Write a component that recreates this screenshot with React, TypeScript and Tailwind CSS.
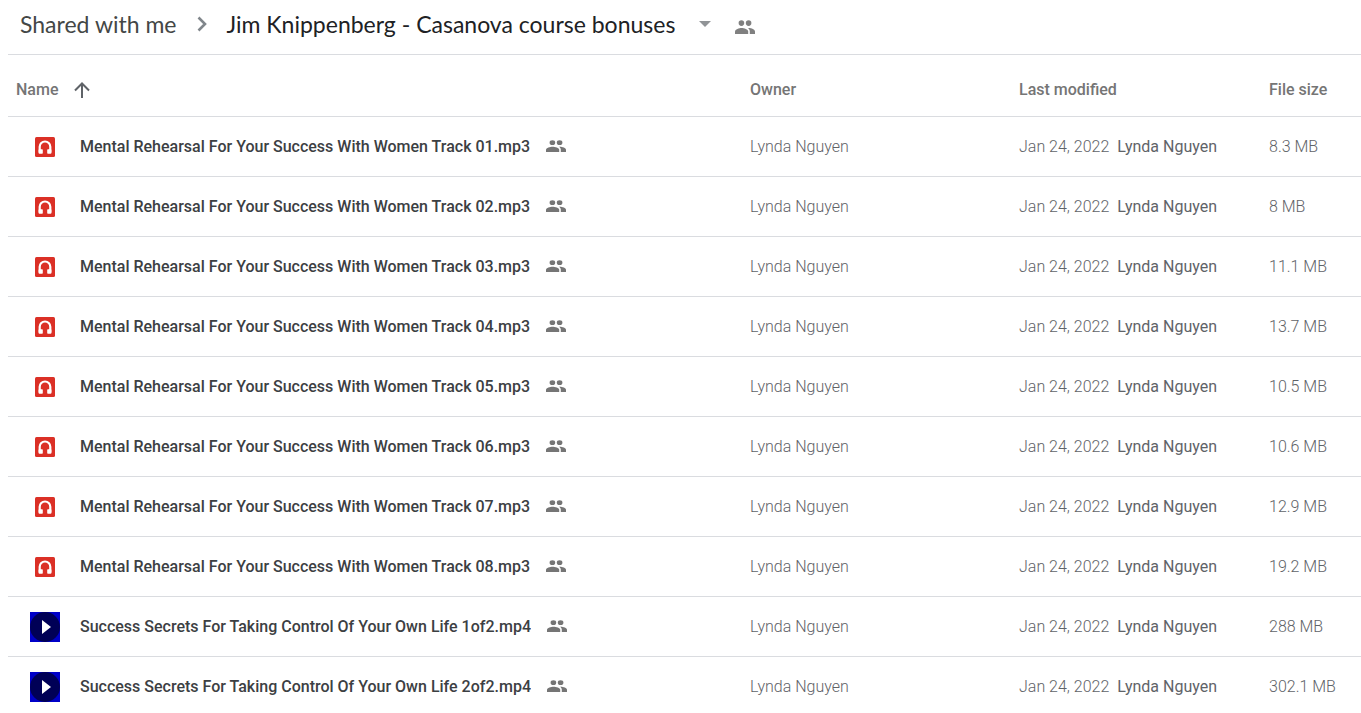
interface DriveFile {
  name: string
  kind: 'audio' | 'video'
  size: string
}

const OWNER = 'Lynda Nguyen'
const MODIFIED = 'Jan 24, 2022'

const files: DriveFile[] = [
  { name: 'Mental Rehearsal For Your Success With Women Track 01.mp3', kind: 'audio', size: '8.3 MB' },
  { name: 'Mental Rehearsal For Your Success With Women Track 02.mp3', kind: 'audio', size: '8 MB' },
  { name: 'Mental Rehearsal For Your Success With Women Track 03.mp3', kind: 'audio', size: '11.1 MB' },
  { name: 'Mental Rehearsal For Your Success With Women Track 04.mp3', kind: 'audio', size: '13.7 MB' },
  { name: 'Mental Rehearsal For Your Success With Women Track 05.mp3', kind: 'audio', size: '10.5 MB' },
  { name: 'Mental Rehearsal For Your Success With Women Track 06.mp3', kind: 'audio', size: '10.6 MB' },
  { name: 'Mental Rehearsal For Your Success With Women Track 07.mp3', kind: 'audio', size: '12.9 MB' },
  { name: 'Mental Rehearsal For Your Success With Women Track 08.mp3', kind: 'audio', size: '19.2 MB' },
  { name: 'Success Secrets For Taking Control Of Your Own Life 1of2.mp4', kind: 'video', size: '288 MB' },
  { name: 'Success Secrets For Taking Control Of Your Own Life 2of2.mp4', kind: 'video', size: '302.1 MB' },
]

function PeopleIcon({ className }: { className: string }) {
  return (
    <svg viewBox="0 0 20 14" preserveAspectRatio="none" className={className} fill="currentColor" aria-hidden="true">
      <circle cx="6.4" cy="3.1" r="2.8" />
      <circle cx="13.6" cy="3.1" r="2.8" />
      <path d="M0 14v-2.500C0 9.200 4.200 8 6.600 8s6.600 1.200 6.600 3.500V14z" />
      <path d="M13 8c2.700-.3 7 1 7 3.500V14h-5.200v-2.500c0-1.500-.700-2.600-1.800-3.500z" />
    </svg>
  )
}

function AudioIcon() {
  return (
    <svg viewBox="0 0 20 20" className="size-5" aria-hidden="true">
      <rect width="20" height="20" rx="1.500" fill="#db3026" />
      <path d="M4.700 15.500V9.800a5.300 5.300 0 0 1 10.600 0v5.700" fill="none" stroke="#fff" strokeWidth="2.200" />
      <rect x="3.600" y="12.200" width="4.200" height="4.600" rx=".8" fill="#fff" />
      <rect x="12.200" y="12.200" width="4.200" height="4.600" rx=".8" fill="#fff" />
    </svg>
  )
}

function VideoIcon() {
  return (
    <svg viewBox="0 0 30 30" className="size-[30px]" aria-hidden="true">
      <rect width="30" height="30" fill="#0000c8" />
      <circle cx="15" cy="15" r="15" fill="#000056" />
      <path d="M12 8v14l9-7z" fill="#fff" />
    </svg>
  )
}

function Breadcrumbs() {
  return (
    <nav className="flex h-[55px] items-center border-b border-[#dadce0] pb-[6px] pl-3 font-['Lato','Open_Sans',sans-serif] text-[23px] leading-7">
      <a href="#shared" className="text-[#444746]">
        Shared with me
      </a>
      <svg viewBox="0 0 10 16" className="mx-5 h-4 w-[10px] text-[#80868b]" fill="none" stroke="currentColor" strokeWidth="2.600" aria-hidden="true">
        <path d="M1.500 1.500 8 8l-6.500 6.500" />
      </svg>
      <button type="button" className="flex items-center text-[#202124]">
        Jim Knippenberg - Casanova course bonuses
        <svg viewBox="0 0 12 6" className="ml-6 h-[6px] w-3 text-[#919497]" fill="currentColor" aria-hidden="true">
          <path d="M0 0h12L6 6z" />
        </svg>
      </button>
      <button type="button" aria-label="Manage access" className="ml-6 pt-[6px]">
        <PeopleIcon className="h-[14px] w-5 text-[#808080]" />
      </button>
    </nav>
  )
}

function FileRow({ file }: { file: DriveFile }) {
  return (
    <tr className="h-[60px] border-b border-[#dadce0]">
      <td className="pt-[2px]">
        <div className="flex items-center">
          <span className="flex w-[72px] shrink-0 justify-center pl-[2px]">
            {file.kind === 'audio' ? <AudioIcon /> : <VideoIcon />}
          </span>
          <a href="#file" className="truncate font-medium text-[#3c4043]">
            {file.name}
          </a>
          <span className="ml-4 shrink-0 pb-[2px]">
            <PeopleIcon className="h-3 w-5 text-[#757575]" />
          </span>
        </div>
      </td>
      <td className="pt-[2px] font-light">{OWNER}</td>
      <td className="pt-[2px]">
        <span className="font-light">{MODIFIED}</span>
        <span className="ml-2">{OWNER}</span>
      </td>
      <td className="pt-[2px] font-light">{file.size}</td>
    </tr>
  )
}

export default function App() {
  return (
    <main className="h-screen overflow-hidden bg-white pl-2 font-['Roboto',sans-serif] text-base text-[#5f6368]">
      <Breadcrumbs />
      <table className="w-full table-fixed border-collapse text-left whitespace-nowrap">
        <colgroup>
          <col />
          <col className="w-[269px]" />
          <col className="w-[250px]" />
          <col className="w-[92px]" />
        </colgroup>
        <thead>
          <tr className="h-[61px] border-b border-[#dadce0] text-[#757575]">
            <th className="pt-[10px] pl-2 font-medium">
              <button type="button" className="flex items-center gap-4">
                Name
                <svg viewBox="0 0 16 16" className="size-4 text-[#5f6368]" fill="none" stroke="currentColor" strokeWidth="2" aria-hidden="true">
                  <path d="M8 16V1.500M1 8.500l7-7 7 7" />
                </svg>
              </button>
            </th>
            <th className="pt-[10px] font-medium">Owner</th>
            <th className="pt-[10px] font-medium">Last modified</th>
            <th className="pt-[10px] font-medium">File size</th>
          </tr>
        </thead>
        <tbody>
          {files.map((file) => (
            <FileRow key={file.name} file={file} />
          ))}
        </tbody>
      </table>
    </main>
  )
}
